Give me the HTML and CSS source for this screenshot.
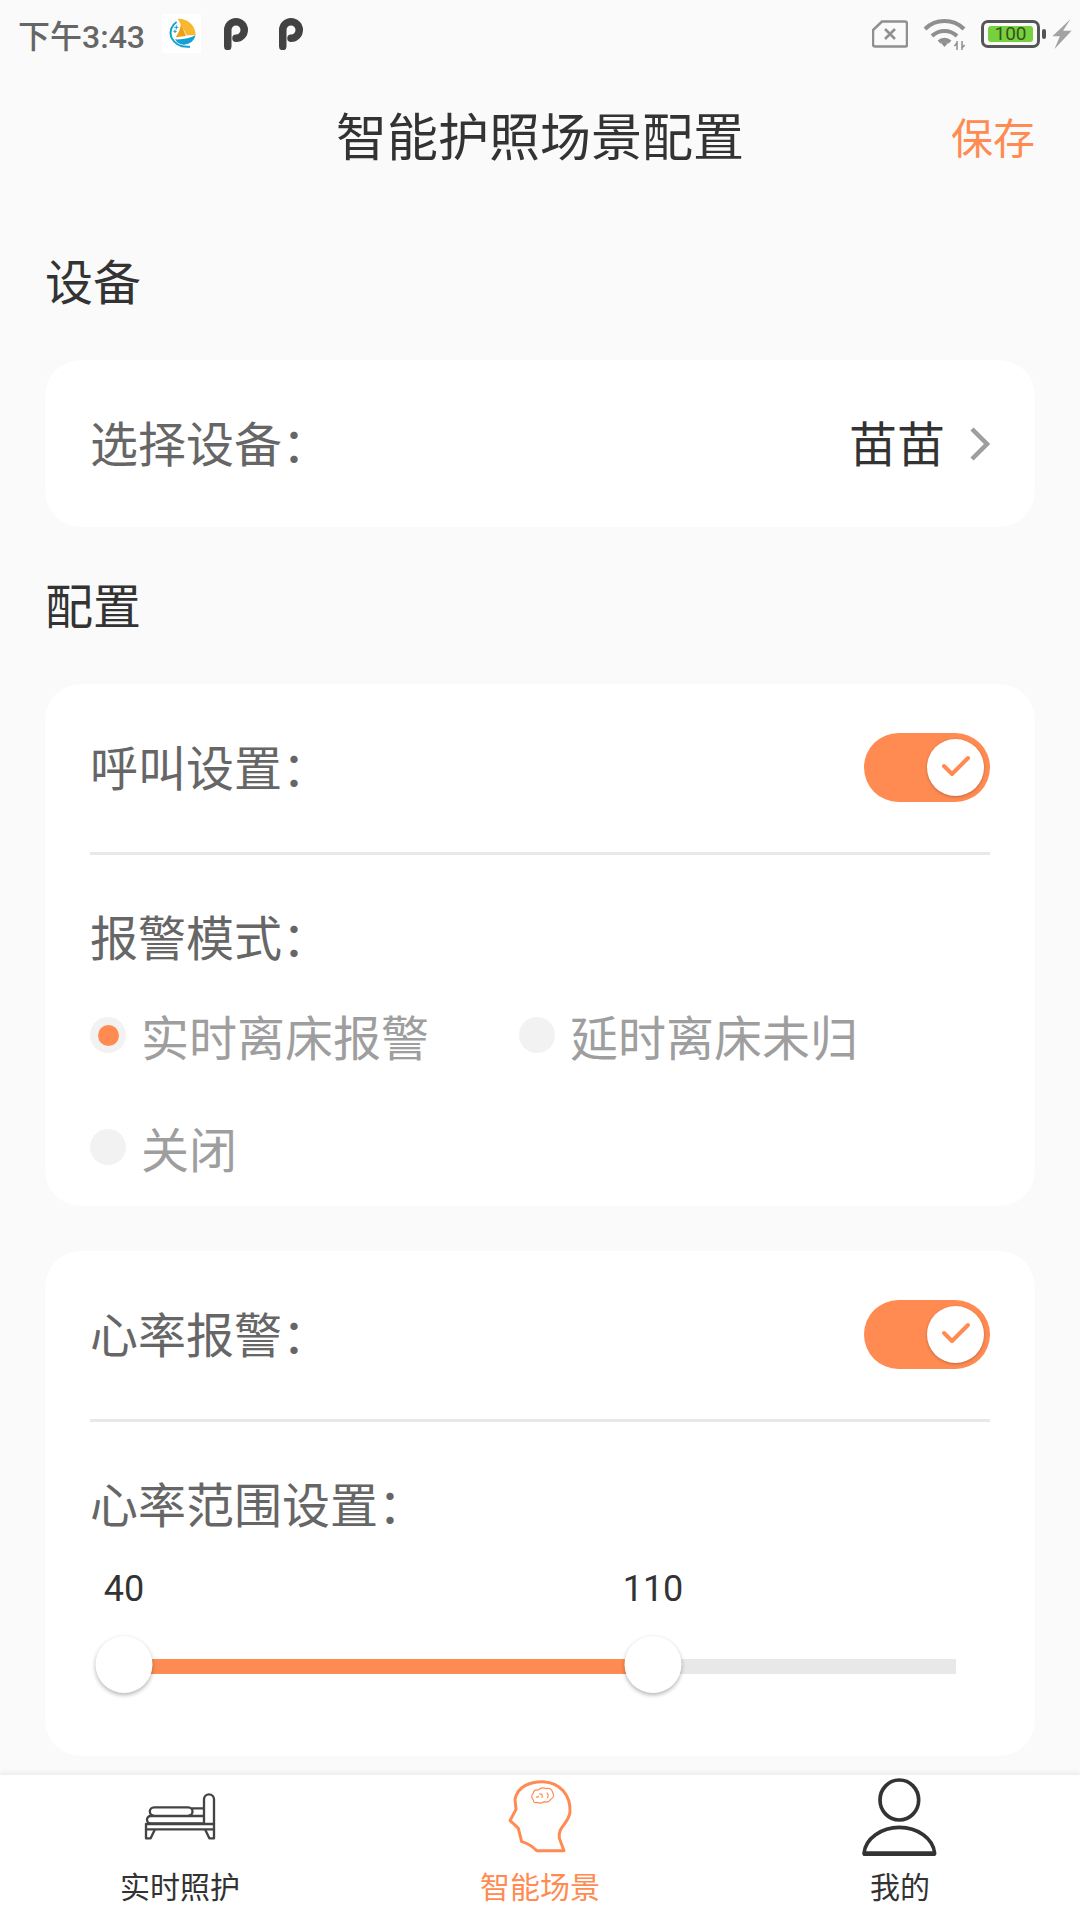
FILE: index.html
```html
<!DOCTYPE html>
<html lang="zh-CN">
<head>
    <meta charset="UTF-8" />
    <meta name="viewport" content="width=device-width, initial-scale=1.0" />
    <title>智能护照场景配置</title>
    <link rel="stylesheet" href="styles.css">
</head>
<body>
    <div class="status-bar">
        <span class="time">下午3:43</span>
        <svg class="app-logo" viewBox="486 48 117 117">
            <rect x="486" y="48" width="117" height="117" fill="#fff"/>
            <path d="M533 62 C565 60 587 85 587 112 L560 112 Z" fill="#f7b731"/>
            <path d="M543 78 L558 114 L527 118 Q540 100 543 78 Z" fill="#ef9f12"/>
            <path d="M525 124 Q560 126 587 112 Q580 138 552 140 Q534 140 525 124 Z" fill="#14a0d2"/>
            <path d="M530 72 A38 38 0 0 0 514 118 Q530 150 570 146" fill="none" stroke="#14a0d2" stroke-width="6"/>
            <path d="M523 88 h12 M529 82 v12 M520 100 h10 M525 95 v10" stroke="#14a0d2" stroke-width="3"/>
        </svg>
        <svg class="p-icon" viewBox="0 0 24 32"><path d="M3.750 28.500 V12 A8.250 8.250 0 1 1 12 20.250"/></svg>
        <svg class="p-icon" viewBox="0 0 24 32"><path d="M3.750 28.500 V12 A8.250 8.250 0 1 1 12 20.250"/></svg>
        <div class="status-right">
            <svg class="sim" viewBox="0 0 36 28">
                <path d="M10 1.500 H33 a2 2 0 0 1 2 2 V25 a1.500 1.500 0 0 1 -1.500 1.500 H3 a2 2 0 0 1 -2 -2 V10 Z"/>
                <path d="M13 9 L23 19 M23 9 L13 19"/>
            </svg>
            <svg class="wifi" viewBox="0 0 44 32">
                <path d="M2 11 A28 28 0 0 1 41 11"/>
                <path d="M9 18 A18 18 0 0 1 34 18"/>
                <path d="M16 24 A8 8 0 0 1 27 24" />
                <path class="wifi-dot" d="M18 25 Q21.500 22.500 25 25 L21.500 29 Z"/>
                <path class="wifi-arrows" d="M34 23 V32 M39 23 V32 M31.500 28 L34 25 M41.500 27 L39 30"/>
            </svg>
            <div class="battery"><span class="battery-level">100</span></div>
            <span class="battery-nub"></span>
            <svg class="bolt" viewBox="0 0 18 28"><path d="M17 0 L0 16 H7 L2 28 L18 11 H10 Z"/></svg>
        </div>
    </div>

    <header class="page-head">
        <span></span>
        <h1>智能护照场景配置</h1>
        <a class="save">保存</a>
    </header>

    <main class="content">
        <h2 class="section-title">设备</h2>
        <section class="card">
            <div class="row">
                <span class="label">选择设备：</span>
                <div class="device">
                    <span class="device-name">苗苗</span>
                    <svg class="chevron" viewBox="0 0 20 34"><path d="M2 2 L17 17 L2 32"/></svg>
                </div>
            </div>
        </section>

        <h2 class="section-title">配置</h2>
        <section class="card card-alarm">
            <div class="row row-line">
                <span class="label">呼叫设置：</span>
                <div class="toggle">
                    <span class="knob"><svg viewBox="0 0 30 24"><path d="M3 11 L11 19 L27 3"/></svg></span>
                </div>
            </div>
            <div class="sub-title"><span>报警模式：</span></div>
            <div class="radios">
                <label class="radio radio-on"><i></i><span>实时离床报警</span></label>
                <label class="radio"><i></i><span>延时离床未归</span></label>
                <label class="radio"><i></i><span>关闭</span></label>
            </div>
        </section>

        <section class="card">
            <div class="row row-line">
                <span class="label">心率报警：</span>
                <div class="toggle">
                    <span class="knob"><svg viewBox="0 0 30 24"><path d="M3 11 L11 19 L27 3"/></svg></span>
                </div>
            </div>
            <div class="sub-title"><span>心率范围设置：</span></div>
            <div class="slider">
                <span class="value value-min">40</span>
                <span class="value value-max">110</span>
                <div class="track">
                    <div class="track-fill"></div>
                </div>
                <span class="thumb thumb-min"></span>
                <span class="thumb thumb-max"></span>
            </div>
        </section>
    </main>

    <nav class="tabs">
        <a class="tab">
            <svg viewBox="0 18 360 240">
                <g class="bed">
                    <path d="M252 162 V88 a15 15 0 0 1 30 0 V162"/>
                    <rect x="78" y="162" width="204" height="16"/>
                    <path d="M78 178 V205 H92 L105 178 M255 178 L268 205 H282 V178"/>
                    <path d="M252 160 H92 a11 11 0 0 1 0 -22 H252"/>
                    <path d="M102 137 a12 12 0 0 1 0 -25 H205 a12 12 0 0 1 0 25 M215 115 H252"/>
                </g>
            </svg>
            <span>实时照护</span>
        </a>
        <a class="tab tab-active">
            <svg viewBox="0 18 360 240">
                <path class="head" d="M252 242 H170 Q150 222 125 215 L115 175 Q100 160 90 152 L108 118 L105 88 C112 50 150 34 190 35 C240 38 272 75 270 125 C268 160 232 170 238 205 Z"/>
                <path class="brain" d="M160 90 Q150 78 160 70 Q160 58 175 60 Q185 50 198 56 Q215 52 218 68 Q226 80 212 88 Q205 100 192 95 Q180 103 172 97 Q160 100 160 90 Z M178 72 Q190 70 186 84 M200 68 Q208 76 202 84 M168 80 Q174 84 176 78"/>
            </svg>
            <span>智能场景</span>
        </a>
        <a class="tab">
            <svg viewBox="0 18 360 240">
                <ellipse class="person" cx="178" cy="90" rx="58" ry="60"/>
                <path class="person" d="M72 250 C76 205 125 172 178 172 C232 172 280 205 284 250 Q284 254 278 254 H78 Q72 254 72 250 Z"/>
                <path class="person-base" d="M72 251 H284"/>
            </svg>
            <span>我的</span>
        </a>
    </nav>
</body>
</html>
```

FILE: styles.css
```css
* { box-sizing: border-box; }
body { margin: 0; width: 1080px; height: 1920px; display: flex; flex-direction: column; overflow: hidden; background-color: #fafafa; color: #333; font-family: Roboto, "Noto Sans CJK SC", sans-serif; }

.status-bar { height: 70px; display: flex; align-items: center; padding: 0 8px 0 18px; color: #666; flex-shrink: 0; }
.time { font-size: 32px; font-weight: 500; width: 144px; margin-bottom: 3px; }
.app-logo { width: 39px; height: 39px; margin-bottom: 3px; }
.p-icon { width: 24px; height: 32px; margin-left: 23px; margin-bottom: 2px; }
.p-icon + .p-icon { margin-left: 31px; }
.p-icon path { fill: none; stroke: #424242; stroke-width: 7.5; stroke-linecap: round; }
.status-right { margin-left: auto; display: flex; align-items: center; margin-bottom: 2px; }
.sim { width: 36px; height: 28px; }
.sim path { fill: none; stroke: #8f8f8f; stroke-width: 2.500; }
.wifi { width: 44px; height: 32px; margin-left: 15px; }
.wifi path { fill: none; stroke: #8f8f8f; stroke-width: 4; }
.wifi .wifi-dot { fill: #8f8f8f; stroke: none; }
.wifi .wifi-arrows { stroke-width: 1.500; }
.battery { width: 59px; height: 28px; margin-left: 14px; border: 3px solid #555; border-radius: 7px; padding: 3px 4px; display: flex; }
.battery-level { flex: 1; background-color: #77d13d; border-radius: 3px; color: #35521f; font-size: 19px; line-height: 16px; text-align: center; }
.battery-nub { width: 4px; height: 10px; margin-left: 2px; background-color: #555; border-radius: 2px; }
.bolt { width: 20px; height: 30px; margin-left: 6px; fill: #a3a3a3; }

.page-head { height: 133px; padding: 0 45px; display: grid; grid-template-columns: 1fr auto 1fr; align-items: center; flex-shrink: 0; }
.page-head h1 { margin: 0 0 5px; font-size: 51px; font-weight: 400; color: #333; }
.save { justify-self: end; margin-bottom: 3px; font-size: 42px; color: #ff8b52; }

.content { flex: 1; padding: 0 45px; overflow: hidden; }
.section-title { height: 157px; margin: 0; padding-bottom: 5px; display: flex; align-items: center; font-size: 48px; font-weight: 400; color: #333; }
.card { background-color: #fff; border-radius: 36px; padding: 0 45px; margin-bottom: 45px; }
.card:nth-of-type(1) { margin-bottom: 0; }

.row { height: 167px; display: flex; align-items: center; justify-content: space-between; }
.row-line { height: 171px; border-bottom: 3px solid #e8e8e8; }
.label, .sub-title { font-size: 48px; color: #666; }
.label, .sub-title span, .device-name { margin-bottom: 6px; }
.device { display: flex; align-items: center; gap: 25px; }
.device-name { font-size: 48px; color: #333; }
.chevron { width: 20px; height: 34px; fill: none; stroke: #9e9e9e; stroke-width: 4.500; }

.toggle { width: 126px; height: 69px; margin-bottom: 2px; padding: 6px; display: flex; justify-content: flex-end; background-color: #ff8b52; border-radius: 35px; }
.knob { width: 57px; height: 57px; display: flex; align-items: center; justify-content: center; background-color: #fff; border-radius: 50%; box-shadow: 0 1px 3px rgba(0, 0, 0, 0.25); }
.knob svg { width: 30px; height: 24px; fill: none; stroke: #ff8b52; stroke-width: 4; stroke-linecap: round; stroke-linejoin: round; }

.sub-title { height: 166px; display: flex; align-items: center; }
.radios { display: flex; flex-wrap: wrap; margin-top: -41px; padding-bottom: 2px; }
.radio { width: 429px; height: 112px; display: flex; align-items: center; gap: 15px; font-size: 48px; color: #9e9e9e; }
.radio span { margin-bottom: 2px; }
.radio i { width: 36px; height: 36px; margin-bottom: 2px; display: flex; align-items: center; justify-content: center; background-color: #f2f2f2; border-radius: 50%; }
.radio-on i::after { content: ""; width: 21px; height: 21px; background-color: #ff8b52; border-radius: 50%; }

.slider { position: relative; height: 188px; margin-top: -20px; }
.value { position: absolute; top: 1px; font-size: 36px; line-height: 40px; color: #333; transform: translateX(-50%); }
.value-min { left: 34px; }
.value-max { left: 563px; }
.track { position: absolute; left: 34px; right: 34px; top: 91px; height: 15px; background-color: #e8e8e8; }
.track-fill { width: 529px; height: 15px; background-color: #ff8b52; }
.thumb { position: absolute; top: 68px; width: 57px; height: 57px; background-color: #fff; border-radius: 50%; box-shadow: 0 2px 4px rgba(0, 0, 0, 0.3); transform: translateX(-50%); }
.thumb-min { left: 34px; }
.thumb-max { left: 563px; }

.tabs { height: 145px; padding-top: 1px; flex-shrink: 0; display: grid; grid-template-columns: repeat(3, 1fr); background-color: #fff; box-shadow: 0 -2px 5px rgba(0, 0, 0, 0.07); }
.tab { display: flex; flex-direction: column; align-items: center; font-size: 30px; color: #333; line-height: 44px; }
.tab svg { width: 120px; height: 80px; margin-bottom: 10px; }
.tab-active { color: #ff8b52; }
.bed path, .bed rect { fill: none; stroke: #444; stroke-width: 7; stroke-linejoin: round; }
.head { fill: none; stroke: #ff8b52; stroke-width: 9; stroke-linejoin: round; }
.brain { fill: none; stroke: #ff8b52; stroke-width: 3.500; }
.person { fill: none; stroke: #333; stroke-width: 11; }
.person-base { stroke: #333; stroke-width: 14; }
```
